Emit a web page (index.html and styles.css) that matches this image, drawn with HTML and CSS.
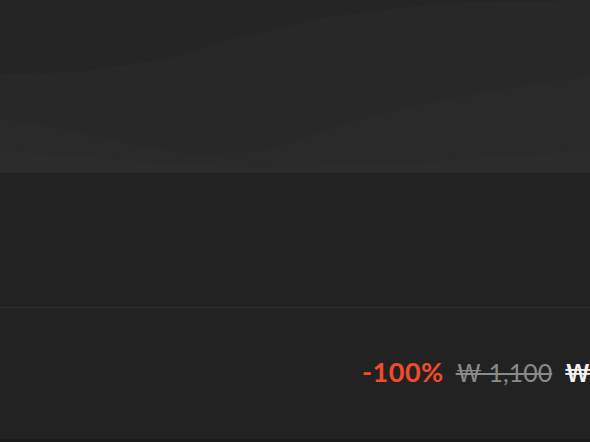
FILE: index.html
```html
<!DOCTYPE html>
<html lang="ko">
<head>
    <meta charset="UTF-8">
    <meta name="viewport" content="width=device-width, initial-scale=1.0">
    <title>Store - Sale</title>
    <link rel="stylesheet" href="styles.css">
</head>
<body>
    <div class="page">
        <header class="hero">
            <svg class="hero-waves" viewBox="0 0 590 173" preserveAspectRatio="none" aria-hidden="true">
                <path d="M0 0 H590 V0 L440 3 L320 18 L230 40 L170 58 L80 72 L0 74 Z" fill="#252525"/>
                <path d="M0 118 L60 128 L140 146 L200 155 L270 150 L330 128 L420 104 L520 86 L590 76 V173 H0 Z" fill="#2a2a2a"/>
                <path d="M0 150 L120 160 L250 168 L400 164 L590 150 V173 H0 Z" fill="#2c2c2c"/>
            </svg>
        </header>

        <section class="info-band"></section>

        <section class="purchase-row">
            <div class="price-block">
                <span class="discount">-100%</span>
                <span class="price-original">₩ 1,100</span>
                <span class="price-final">₩ 0</span>
            </div>
        </section>

        <footer class="page-foot"></footer>
    </div>
</body>
</html>
```

FILE: styles.css
```css
:root {
    --page-bg: #222222;
    --hero-bg: #282828;
    --divider: #2f2f2f;
    --foot-bg: #1a1a1a;
    --sale-red: #f24b2a;
    --text-muted: #8a8a8a;
    --text-light: #f2f2f2;
    --font-family: 'Lato', 'Liberation Sans', sans-serif;
}
*, *::before, *::after { box-sizing: border-box; }
html, body { margin: 0; height: 100%; }
body { background-color: var(--page-bg); font-family: var(--font-family); overflow: hidden; }
.page { display: flex; flex-direction: column; width: 590px; height: 442px; overflow: hidden; }
.hero { position: relative; height: 173px; flex-shrink: 0; background-color: var(--hero-bg); }
.hero-waves { display: block; width: 100%; height: 100%; }
.info-band { height: 135px; flex-shrink: 0; background-color: var(--page-bg); border-bottom: 1px solid var(--divider); }
.purchase-row { flex: 1; display: flex; align-items: flex-start; padding: 47px 0 0 362px; background-color: var(--page-bg); }
.price-block { display: flex; align-items: baseline; gap: 12px; white-space: nowrap; }
.discount { color: var(--sale-red); font-size: 27px; font-weight: 700; letter-spacing: 0.5px; }
.price-original { color: var(--text-muted); font-size: 25px; text-decoration: line-through; text-decoration-thickness: 2px; }
.price-final { color: var(--text-light); font-size: 25px; font-weight: 700; }
.page-foot { height: 3px; flex-shrink: 0; background-color: var(--foot-bg); }
```
